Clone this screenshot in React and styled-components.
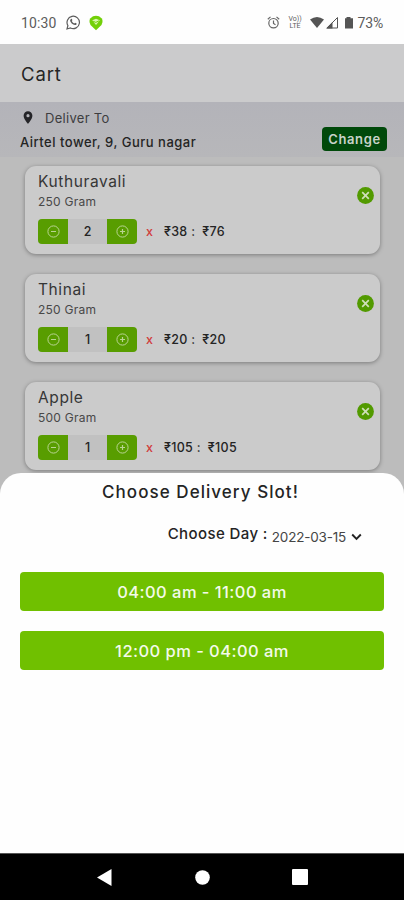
import { useState } from "react";
import styled, { createGlobalStyle } from "styled-components";

const GlobalStyle = createGlobalStyle`
  * {
    box-sizing: border-box;
  }
  body {
    margin: 0;
    font-family: Inter, "Open Sans", sans-serif;
    color: #242424;
  }
  button {
    border: 0;
    padding: 0;
    font-family: inherit;
    cursor: pointer;
  }
`;

const Screen = styled.div`
  position: relative;
  width: 404px;
  height: 900px;
  display: flex;
  flex-direction: column;
  overflow: hidden;
  background: #bcbcbc;
`;

const StatusBar = styled.div`
  height: 44px;
  flex-shrink: 0;
  display: flex;
  align-items: center;
  padding: 1px 21px 0;
  background: #fefefe;
  color: #5c5c5c;
  font: 14px Roboto, sans-serif;
  svg {
    display: block;
  }
`;

const Clock = styled.span`
  width: 45px;
  letter-spacing: 0.1px;
`;

const StatusIcons = styled.div`
  display: flex;
  align-items: center;
  gap: 8px;
`;

const SystemIcons = styled(StatusIcons)`
  margin-left: auto;
  gap: 0;
`;

const Lte = styled.span`
  width: 17px;
  margin: 0 6px 0 7px;
  font-size: 7px;
  line-height: 7px;
  text-align: center;
`;

const Percent = styled.span`
  margin-left: 4px;
  letter-spacing: -0.2px;
`;

const Header = styled.div`
  height: 58px;
  flex-shrink: 0;
  padding: 18px 21px 0;
  background: #cbcbcc;
  font-size: 18.5px;
  line-height: 24px;
  letter-spacing: 0.9px;
`;

const Address = styled.div`
  height: 55px;
  flex-shrink: 0;
  display: flex;
  justify-content: space-between;
  padding: 0 17px 0 20px;
  background: linear-gradient(#b3b3b9, #b7b7ba);
`;

const DeliverTo = styled.div`
  display: flex;
  align-items: center;
  gap: 12px;
  height: 31px;
  padding-left: 3px;
  font-size: 13px;
  letter-spacing: 0.3px;
  color: #3d3d40;
`;

const AddressText = styled.div`
  font-size: 13px;
  line-height: 18px;
  font-weight: 500;
  letter-spacing: 0.5px;
  white-space: nowrap;
`;

const ChangeButton = styled.button`
  width: 65px;
  height: 24px;
  margin-top: 25px;
  border-radius: 4px;
  background: #00490a;
  color: #c9d3c9;
  font-size: 13px;
  font-weight: 600;
  letter-spacing: 0.6px;
`;

const CartList = styled.div`
  display: flex;
  flex-direction: column;
  gap: 20px;
  padding: 9px 24px 0 25px;
`;

const Card = styled.div`
  height: 88px;
  flex-shrink: 0;
  display: flex;
  justify-content: space-between;
  padding: 6px 6px 0 13px;
  border-radius: 11px;
  background: #cbcbcb;
  box-shadow: 0 1px 4px rgba(0, 0, 0, 0.35);
`;

const ItemName = styled.div`
  font-size: 15.5px;
  line-height: 20px;
  letter-spacing: 0.6px;
  color: #363636;
`;

const Weight = styled.div`
  font-size: 12px;
  line-height: 20px;
  letter-spacing: 0.25px;
  color: #484848;
`;

const PriceRow = styled.div`
  display: flex;
  align-items: center;
  height: 25px;
  margin-top: 7px;
  font-size: 12.5px;
  font-weight: 500;
`;

const Stepper = styled.div`
  display: grid;
  grid-template-columns: 30px 39px 30px;
  width: 99px;
  height: 25px;
  border-radius: 4px;
  overflow: hidden;
  background: #c1c1c1;
  line-height: 25px;
  text-align: center;
`;

const StepButton = styled.button`
  display: flex;
  align-items: center;
  justify-content: center;
  background: #589d00;
  color: #b9d492;
`;

const Times = styled.span`
  width: 27px;
  padding-left: 9px;
  color: #d13c3c;
`;

const Price = styled.span`
  letter-spacing: 0.3px;
  & + & {
    margin-left: 7px;
  }
`;

const RemoveButton = styled.button`
  width: 17px;
  height: 17px;
  margin-top: 15px;
  background: none;
  svg {
    display: block;
  }
`;

const Sheet = styled.div`
  position: absolute;
  top: 473px;
  left: 0;
  right: 0;
  bottom: 47px;
  padding: 7px 20px 0;
  border-radius: 21px 21px 0 0;
  background: #fefefe;
`;

const SheetTitle = styled.div`
  padding-right: 3px;
  font-size: 17px;
  line-height: 24px;
  font-weight: 500;
  letter-spacing: 1.05px;
  text-align: center;
`;

const DayRow = styled.div`
  display: flex;
  justify-content: flex-end;
  height: 68px;
  padding: 19px 22px 0 0;
  white-space: nowrap;
`;

const DayLabel = styled.span`
  font-size: 15px;
  line-height: 21px;
  font-weight: 500;
  letter-spacing: 0.4px;
`;

const DayPicker = styled.button`
  display: flex;
  align-items: center;
  gap: 5px;
  height: 20px;
  margin: 4px 0 0 4px;
  background: none;
  color: #454545;
  font-size: 13.5px;
  letter-spacing: -0.2px;
`;

const Slots = styled.div`
  display: grid;
  gap: 20px;
`;

const SlotButton = styled.button`
  height: 39px;
  border-radius: 4px;
  background: #70c000;
  color: #f4faea;
  font-size: 16.5px;
  font-weight: 500;
  letter-spacing: 0.45px;
`;

const NavBar = styled.div`
  position: absolute;
  left: 0;
  right: 0;
  bottom: 0;
  height: 47px;
  display: flex;
  align-items: center;
  justify-content: space-between;
  padding: 0 96px 0 97px;
  border-top: 1px solid #555;
  background: #000;
`;

const startItems = [
  { id: 1, name: "Kuthuravali", weight: "250 Gram", price: 38, qty: 2 },
  { id: 2, name: "Thinai", weight: "250 Gram", price: 20, qty: 1 },
  { id: 3, name: "Apple", weight: "500 Gram", price: 105, qty: 1 },
];

const slots = ["04:00 am - 11:00 am", "12:00 pm - 04:00 am"];

function WhatsappIcon() {
  return (
    <svg width="15" height="15" viewBox="0 0 15 15" fill="none" stroke="#5c5c5c">
      <path d="M1 14l.9-3.4A6.2 6.2 0 1 1 4.5 13z" strokeWidth="1.2" />
      <path
        d="M4.7 4.2c.5-.8 1.2-.5 1.3 0l.4 1.1-.6.8c.5 1.1 1.3 1.8 2.5 2.4l.8-.8 1.5.7c.3.8-.6 1.7-1.6 1.7-2.4-.3-4.6-2.7-4.9-4.4 0-.6.2-1.1.6-1.5z"
        fill="#5c5c5c"
        stroke="none"
      />
    </svg>
  );
}

function ShopIcon() {
  return (
    <svg width="14" height="16" viewBox="0 0 14 16">
      <path
        d="M4 1.300Q7 .3 10 1.300L12.800 3.500Q13.700 4.500 13.500 7L12.500 10 7 15.200 1.500 10 .5 7Q.3 4.500 1.200 3.500z"
        fill="#72d008"
      />
      <path d="M3.3 5.3L7 3.8l3.8 1.5L7 10z" fill="#d9f7b0" />
      <path d="M4.2 6.3l2.6 1.1L10 5.8" stroke="#72d008" fill="none" />
    </svg>
  );
}

function AlarmIcon() {
  return (
    <svg width="13" height="13" viewBox="0 0 13 13" fill="none" stroke="#666" strokeWidth="1.2">
      <circle cx="6.5" cy="7.2" r="4.7" />
      <path d="M.8 3.2L3.5.9M12.2 3.2L9.5.9M6.5 4.5v3l2 1.2" />
    </svg>
  );
}

function SignalIcons() {
  return (
    <svg width="44" height="14" viewBox="0 0 44 14" fill="#555">
      <path d="M0 3.5Q7 -1.5 14 3.5L7 12z" />
      <path d="M17 12L27.5 1.5V12z" fill="none" stroke="#555" />
      <path d="M16 12.5L22.5 6v6.5z" />
      <path d="M36.5 1h4v1.300H43V12.500h-8V2.300h1.500z" />
    </svg>
  );
}

function PinIcon() {
  return (
    <svg width="10" height="13" viewBox="0 0 10 13">
      <path
        fillRule="evenodd"
        fill="#242428"
        d="M5 .3a4.400 4.400 0 0 0-4.400 4.400C.6 8 5 12.800 5 12.800S9.400 8 9.400 4.700A4.400 4.400 0 0 0 5 .3zM5 3.100a1.600 1.600 0 1 1 0 3.200 1.600 1.600 0 0 1 0-3.200z"
      />
    </svg>
  );
}

function StepIcon({ plus }) {
  return (
    <svg width="13" height="13" viewBox="0 0 13 13" fill="none" stroke="currentColor">
      <circle cx="6.5" cy="6.5" r="5.6" />
      <path d={plus ? "M4 6.5h5M6.5 4v5" : "M4 6.5h5"} strokeWidth="1.2" />
    </svg>
  );
}

function RemoveIcon() {
  return (
    <svg width="17" height="17" viewBox="0 0 17 17">
      <circle cx="8.5" cy="8.5" r="8.4" fill="#529a00" />
      <path d="M5.2 5.2l6.6 6.600M11.800 5.200l-6.600 6.600" stroke="#cfdfb8" strokeWidth="1.7" />
    </svg>
  );
}

export default function App() {
  const [items, setItems] = useState(startItems);

  const changeQty = (id, step) =>
    setItems(
      items.map((item) =>
        item.id === id ? { ...item, qty: Math.max(1, item.qty + step) } : item
      )
    );

  return (
    <Screen>
      <GlobalStyle />
      <StatusBar>
        <Clock>10:30</Clock>
        <StatusIcons>
          <WhatsappIcon />
          <ShopIcon />
        </StatusIcons>
        <SystemIcons>
          <AlarmIcon />
          <Lte>Vo)) LTE</Lte>
          <SignalIcons />
          <Percent>73%</Percent>
        </SystemIcons>
      </StatusBar>
      <Header>Cart</Header>
      <Address>
        <div>
          <DeliverTo>
            <PinIcon />
            Deliver To
          </DeliverTo>
          <AddressText>Airtel tower, 9, Guru nagar</AddressText>
        </div>
        <ChangeButton>Change</ChangeButton>
      </Address>
      <CartList>
        {items.map((item) => (
          <Card key={item.id}>
            <div>
              <ItemName>{item.name}</ItemName>
              <Weight>{item.weight}</Weight>
              <PriceRow>
                <Stepper>
                  <StepButton onClick={() => changeQty(item.id, -1)}>
                    <StepIcon />
                  </StepButton>
                  <span>{item.qty}</span>
                  <StepButton onClick={() => changeQty(item.id, 1)}>
                    <StepIcon plus />
                  </StepButton>
                </Stepper>
                <Times>x</Times>
                <Price>₹{item.price} :</Price>
                <Price>₹{item.price * item.qty}</Price>
              </PriceRow>
            </div>
            <RemoveButton
              onClick={() => setItems(items.filter((i) => i.id !== item.id))}
            >
              <RemoveIcon />
            </RemoveButton>
          </Card>
        ))}
      </CartList>
      <Sheet>
        <SheetTitle>Choose Delivery Slot!</SheetTitle>
        <DayRow>
          <DayLabel>Choose Day :</DayLabel>
          <DayPicker>
            2022-03-15
            <svg width="11" height="8" viewBox="0 0 11 8" fill="none">
              <path d="M1.2 1.5l4.3 4.3 4.3-4.3" stroke="#222" strokeWidth="1.9" />
            </svg>
          </DayPicker>
        </DayRow>
        <Slots>
          {slots.map((slot) => (
            <SlotButton key={slot}>{slot}</SlotButton>
          ))}
        </Slots>
      </Sheet>
      <NavBar>
        <svg width="15" height="17" viewBox="0 0 15 17">
          <path d="M0 8.5L14.5 0v17z" fill="#fff" />
        </svg>
        <svg width="15" height="15" viewBox="0 0 15 15">
          <circle cx="7.5" cy="7.5" r="7.3" fill="#fff" />
        </svg>
        <svg width="16" height="16" viewBox="0 0 16 16">
          <rect width="16" height="16" rx="1" fill="#fff" />
        </svg>
      </NavBar>
    </Screen>
  );
}
